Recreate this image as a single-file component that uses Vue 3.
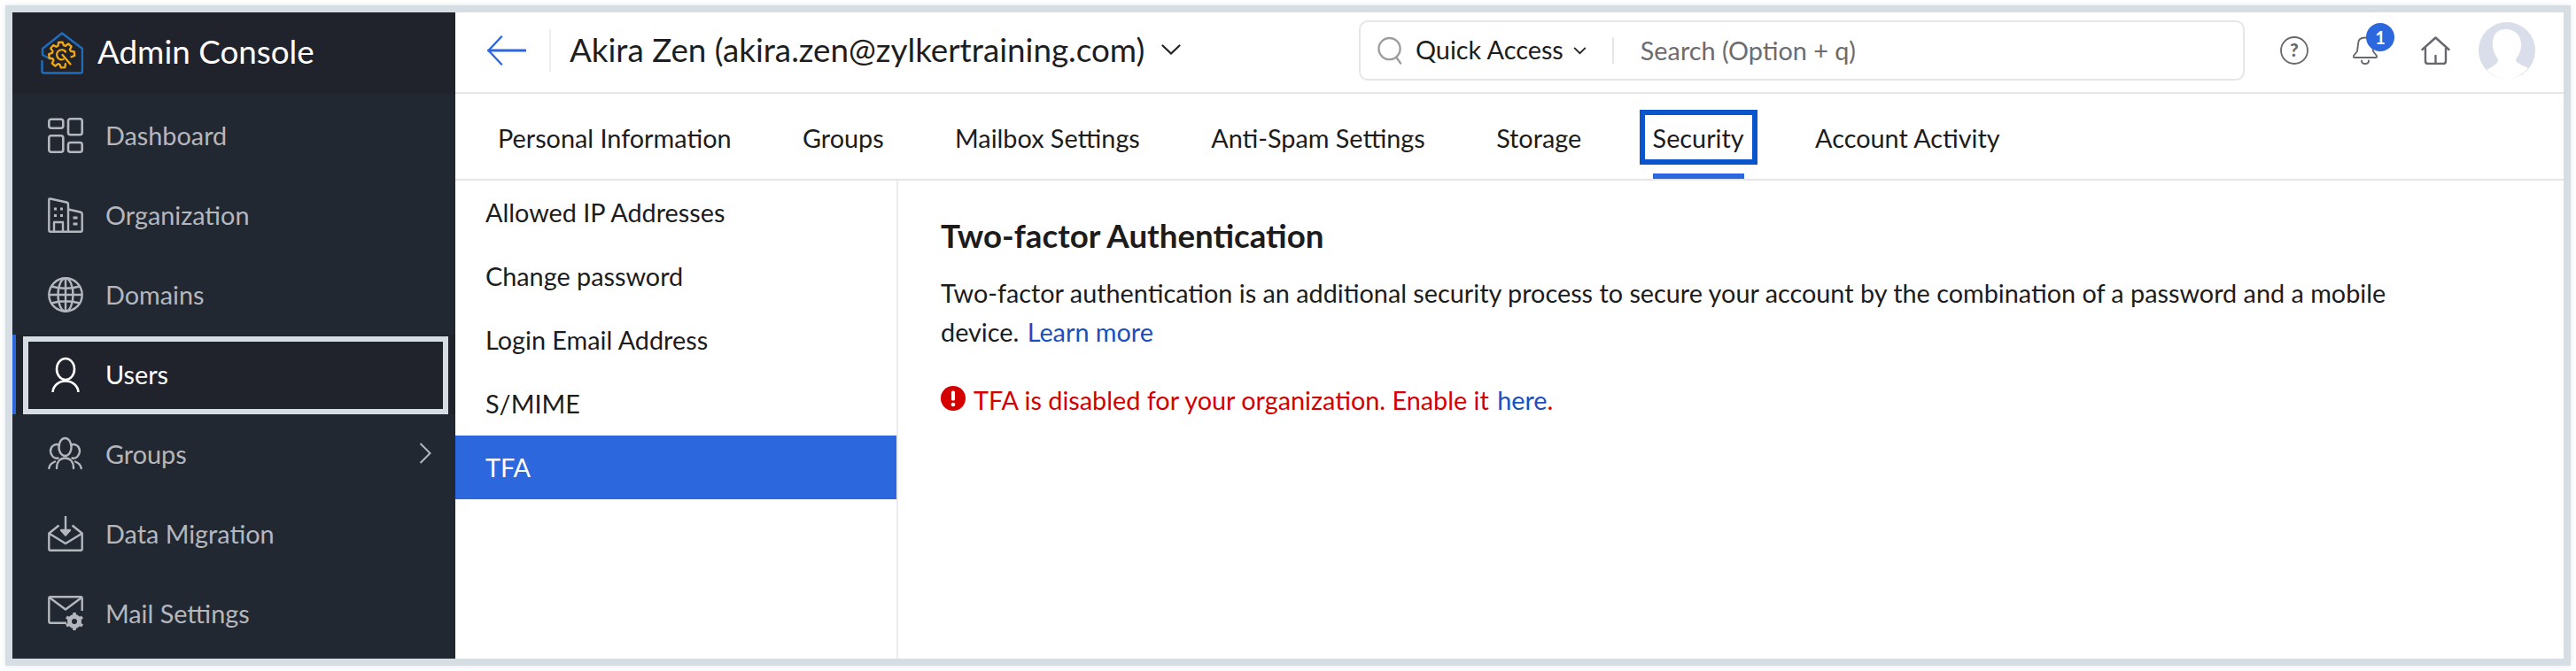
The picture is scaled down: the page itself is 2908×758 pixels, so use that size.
<script setup>
const tabs = ['Personal Information', 'Groups', 'Mailbox Settings', 'Anti-Spam Settings', 'Storage', 'Security', 'Account Activity']
const subItems = ['Allowed IP Addresses', 'Change password', 'Login Email Address', 'S/MIME', 'TFA']

// Gear outline for the logo: eight teeth, left open at the lower right for the spanner handle.
function gearPath(cx, cy, rOut, rIn, teeth, startDeg, sweepDeg) {
  const step = 360 / teeth
  const pts = []
  for (let a = startDeg; a < startDeg + sweepDeg - 0.01; a += step) {
    const offs = [[0.12, rIn], [0.3, rOut], [0.7, rOut], [0.88, rIn]]
    for (const [f, r] of offs) {
      const t = ((a + f * step) * Math.PI) / 180
      pts.push(`${(cx + r * Math.cos(t)).toFixed(2)} ${(cy + r * Math.sin(t)).toFixed(2)}`)
    }
  }
  return 'M' + pts.join(' L')
}
const gear = gearPath(23.7, 26, 14.5, 11, 8, 62, 315)
</script>

<template>
  <div class="frame">
    <aside class="sidebar">
      <div class="brand">
        <svg class="logo" viewBox="0 0 48 48" fill="none">
          <path d="M11.500 31 L2 26 V19 L24 1.500 L47 19 V44.500 Q47 46.500 45 46.500 H3.500 Q1.500 46.500 1.500 44.500 V33" stroke="#1f6ebd" stroke-width="2.400" stroke-linejoin="round" stroke-linecap="round" />
          <path :d="gear" stroke="#f4a90f" stroke-width="2.300" stroke-linejoin="round" stroke-linecap="round" />
          <path d="M28 22.500 A5.500 5.500 0 1 0 25.500 31 M24.500 26 L33.500 36.500" stroke="#f4a90f" stroke-width="2.300" stroke-linecap="round" />
        </svg>
        <span class="brand-name">Admin Console</span>
      </div>
      <nav class="nav">
        <a class="nav-item">
          <svg class="nav-icon" viewBox="0 0 40 40" fill="none" stroke="currentColor" stroke-width="2.600">
            <rect x="1.300" y="1.800" width="16" height="10" rx="2.500" /><rect x="23" y="1.300" width="15.700" height="18" rx="2.500" />
            <rect x="1.300" y="20.300" width="16" height="18.400" rx="2.500" /><rect x="23" y="28" width="15.700" height="10.700" rx="2.500" />
          </svg>
          <span>Dashboard</span>
        </a>
        <a class="nav-item">
          <svg class="nav-icon" viewBox="0 0 40 40" fill="none" stroke="currentColor" stroke-width="2.400" stroke-linejoin="round">
            <path d="M1.300 37 V2.500 Q1.300 1.200 2.800 1.500 L21 5.500 Q23 6 23 8 V38.700 H3 Q1.300 38.700 1.300 37 Z" />
            <path d="M23 13.500 L36.500 16.500 Q38.700 17 38.700 19 V37 Q38.700 38.700 37 38.700 H23" />
            <path d="M7 38.700 V28 H17 V38.700" />
            <path d="M7 13 H10 M14 13 H17 M7 20.500 H10 M14 20.500 H17 M28.500 23 H33.500 M28.500 30 H33.500" stroke-width="2.800" />
          </svg>
          <span>Organization</span>
        </a>
        <a class="nav-item">
          <svg class="nav-icon" viewBox="0 0 40 40" fill="none" stroke="currentColor" stroke-width="2.400">
            <circle cx="20" cy="20" r="18.700" />
            <ellipse cx="20" cy="20" rx="8.500" ry="18.700" />
            <path d="M20 1.300 V38.700 M1.300 20 H38.700 M4 10.500 Q20 15 36 10.500 M4 29.500 Q20 25 36 29.500" />
          </svg>
          <span>Domains</span>
        </a>
        <a class="nav-item active">
          <svg class="nav-icon" viewBox="0 0 40 40" fill="none" stroke="currentColor" stroke-width="2.600" stroke-linecap="round">
            <ellipse cx="20" cy="14" rx="10" ry="12" />
            <path d="M5.500 41 C5.500 33 12 27.500 20 27.500 C28 27.500 34.500 33 34.500 41" />
          </svg>
          <span>Users</span>
        </a>
        <a class="nav-item">
          <svg class="nav-icon" viewBox="0 0 40 40" fill="none" stroke="currentColor" stroke-width="2.400" stroke-linecap="round">
            <ellipse cx="19.500" cy="12" rx="7" ry="10" />
            <path d="M12.500 9.500 C8 8 3 11 3 16.500 C3 21.500 7 25.500 11.500 24.500" />
            <path d="M26.500 9.500 C31 8 36 11 36 16.500 C36 21.500 32 25.500 27.500 24.500" />
            <path d="M10 36 C10 28.500 14 24.500 19.500 24.500 C25 24.500 29 28.500 29 36" />
            <path d="M1.300 36 C1.800 32.500 4 30 8 28.500 M37.700 36 C37.200 32.500 35 30 31 28.500" />
          </svg>
          <span>Groups</span>
          <svg class="nav-caret" viewBox="0 0 14 24" fill="none" stroke="currentColor" stroke-width="2"><path d="M1.500 1 L12.500 12 L1.500 23" /></svg>
        </a>
        <a class="nav-item">
          <svg class="nav-icon" viewBox="0 0 40 40" fill="none" stroke="currentColor" stroke-width="2.400" stroke-linejoin="round">
            <path d="M12.500 10.500 L1.300 19.500 V37 Q1.300 38.700 3 38.700 H37 Q38.700 38.700 38.700 37 V19.500 L27.500 10.500" />
            <path d="M1.300 19.500 L20 31 L38.700 19.500" />
            <path d="M20 0 V20" />
            <path d="M15 16 H25 L20 21.500 Z" fill="currentColor" />
          </svg>
          <span>Data Migration</span>
        </a>
        <a class="nav-item">
          <svg class="nav-icon" viewBox="0 0 40 40" fill="none" stroke="currentColor" stroke-width="2.400" stroke-linejoin="round">
            <path d="M21 30.700 H3 Q1.300 30.700 1.300 29 V2.800 Q1.300 1.300 3 1.300 H37 Q38.700 1.300 38.700 3 V17" />
            <path d="M1.800 2 L20 15.500 L38.200 2" />
            <circle cx="30" cy="29" r="5.500" stroke-width="5" />
            <path d="M30 19 V22.500 M30 35.500 V39 M21 24 L24 26 M36 32 L39 34 M21 34 L24 32 M36 26 L39 24" stroke-width="3.600" />
          </svg>
          <span>Mail Settings</span>
        </a>
      </nav>
    </aside>

    <main class="main">
      <header class="topbar">
        <div class="back-wrap">
          <svg class="back" viewBox="0 0 44 34" fill="none" stroke="#2d67de" stroke-width="2.400" stroke-linecap="round" stroke-linejoin="round">
            <path d="M16 1.500 L1.500 17 L16 32.500" /><path d="M1.500 17 H43" stroke-width="3" />
          </svg>
        </div>
        <div class="who">
          <span>Akira Zen (akira.zen@zylkertraining.com)</span>
          <svg class="who-caret" viewBox="0 0 22 12" fill="none" stroke="#222" stroke-width="2.200" stroke-linecap="round"><path d="M1.500 1.500 L11 10.500 L20.500 1.500" /></svg>
        </div>
        <div class="search">
          <svg class="search-icon" viewBox="0 0 30 32" fill="none" stroke="#9c9c9c" stroke-width="2.400" stroke-linecap="round">
            <ellipse cx="14" cy="14" rx="12.500" ry="12.500" /><path d="M22 24 L27 31" />
          </svg>
          <span class="quick">Quick Access</span>
          <svg class="quick-caret" viewBox="0 0 16 10" fill="none" stroke="#222" stroke-width="2" stroke-linecap="round"><path d="M1.500 1.500 L8 8 L14.500 1.500" /></svg>
          <span class="search-sep"></span>
          <span class="placeholder">Search (Option + q)</span>
        </div>
        <div class="top-icons">
          <svg class="ti ti-help" viewBox="0 0 32 32" fill="none">
            <circle cx="16" cy="16" r="15" stroke="#66686d" stroke-width="1.800" />
            <text x="16" y="23" text-anchor="middle" font-family="Lato, sans-serif" font-size="21" font-weight="900" fill="#66686d">?</text>
          </svg>
          <span class="bell">
            <svg class="ti-bell" viewBox="0 0 28 32" fill="none" stroke="#66686d" stroke-width="1.900" stroke-linejoin="round" stroke-linecap="round">
              <path d="M6 9 Q6 1.500 14 1.500 Q22 1.500 22 9 L23 17 L27 22 Q27.500 24 26 24 H2 Q0.500 24 1 22 L5 17 Z" />
              <path d="M10 27.500 Q10 31 14 31 Q18 31 18 27.500" />
            </svg>
            <b class="badge">1</b>
          </span>
          <svg class="ti ti-home" viewBox="0 0 33 32" fill="none" stroke="#66686d" stroke-width="2.400" stroke-linecap="round" stroke-linejoin="round">
            <path d="M1.500 15 L16.500 1.500 L31.500 15" />
            <path d="M5 14 V28 Q5 31 8 31 H25 Q28 31 28 28 V14" />
            <path d="M16.500 22 V31" />
          </svg>
          <svg class="avatar" viewBox="0 0 64 64">
            <circle cx="32" cy="32" r="32" fill="#dadeea" />
            <path d="M32 8 C20 7 15 16 16 27 C17 34 19 38 22 42 C22 46 20 48 9 54 C18 62 26 64 32 64 C38 64 47 62 56 52 C48 48 42 46 42 42 C46 37 48 32 48 25 C48 15 42 9 32 8 Z" fill="#fff" />
          </svg>
        </div>
      </header>

      <div class="tabs">
        <a v-for="t in tabs" :key="t" class="tab" :class="{ current: t === 'Security' }">{{ t }}</a>
      </div>

      <div class="content">
        <ul class="subnav">
          <li v-for="s in subItems" :key="s" :class="{ on: s === 'TFA' }">{{ s }}</li>
        </ul>
        <section class="detail">
          <h2>Two-factor Authentication</h2>
          <p class="desc">Two-factor authentication is an additional security process to secure your account by the combination of a password and a mobile device. <a>Learn more</a></p>
          <p class="warn">
            <svg class="warn-icon" viewBox="0 0 28 28"><circle cx="14" cy="14" r="14" fill="#d40000" /><rect x="12" y="5.500" width="4" height="11" rx="1.500" fill="#fff" /><circle cx="14" cy="21" r="2.300" fill="#fff" /></svg>
            <span>TFA is disabled for your organization. Enable it <a>here</a>.</span>
          </p>
        </section>
      </div>
    </main>
  </div>
</template>

<style>
html, body { margin: 0; background: #fff; }
</style>

<style scoped>
.frame {
  margin: 6px;
  height: 730px;
  border: 8px solid #d6dee3;
  box-shadow: 0 0 6px rgba(190, 205, 215, .45);
  display: flex;
  font-family: Lato, "Liberation Sans", sans-serif;
  color: #1c1c1c;
  background: #fff;
  overflow: hidden;
}
.sidebar { width: 500px; flex: none; background: #222831; }
.brand {
  height: 92px; background: #20232c;
  display: flex; align-items: center; padding-left: 32px; gap: 17px;
  box-sizing: border-box;
}
.logo { width: 48px; height: 48px; }
.brand-name { color: #fff; font-size: 36.8px; line-height: 1; margin-top: -4px; margin-left: -1px; }
.nav { padding-top: 2px; }
.nav-item {
  position: relative; height: 90px; box-sizing: border-box;
  display: flex; align-items: center; padding-left: 40px; gap: 25px;
  font-size: 28.8px; color: #b4b7bd;
}
.nav-icon { width: 40px; height: 40px; flex: none; }
.nav-caret { width: 14px; height: 24px; position: absolute; right: 27px; top: 32px; color: #b4b7bd; }
.nav-item.active { color: #fff; background: #20232c; border-left: 4px solid #2d67de; padding-left: 36px; }
.nav-item.active::after {
  content: ""; position: absolute; left: 8px; right: 8px; top: 2px; bottom: 0;
  border: 6px solid #d6dee3;
}

.main { flex: 1; min-width: 0; display: flex; flex-direction: column; }
.topbar {
  height: 92px; box-sizing: border-box; flex: none;
  border-bottom: 2px solid #e6e6e6;
  display: flex; align-items: center;
}
.back-wrap {
  margin-left: 36px; padding-right: 26px; height: 48px;
  border-right: 2px solid #ececec; display: flex; align-items: center;
  margin-top: -4px;
}
.back { width: 44px; height: 34px; }
.who { margin-left: 21px; font-size: 36.8px; display: flex; align-items: center; gap: 19px; width: 891px; flex: none; margin-top: -6px; color: #1e1e1e; }
.who-caret { width: 22px; height: 12px; }
.search {
  width: 1000px; height: 68px; box-sizing: border-box; flex: none;
  border: 2px solid #e6e6e6; border-radius: 10px;
  display: flex; align-items: center; padding-left: 19px;
  align-self: flex-start; margin-top: 9px;
}
.search-icon { width: 29px; height: 32px; flex: none; }
.quick { margin-left: 14px; font-size: 28.8px; color: #1c1c1c; margin-top: -2px; }
.quick-caret { width: 15px; height: 9px; margin-left: 11px; }
.search-sep { width: 2px; height: 30px; background: #e6e6e6; margin-left: 29px; }
.placeholder { margin-left: 30px; font-size: 28.8px; color: #6c6c70; }
.top-icons { margin-left: 40px; display: flex; align-items: center; height: 64px; align-self: flex-start; margin-top: 11px; }
.ti-help { width: 32px; height: 32px; }
.bell { position: relative; width: 28px; height: 32px; margin-left: 50px; }
.ti-bell { width: 28px; height: 32px; display: block; }
.badge {
  position: absolute; left: 15px; top: -15px; width: 32px; height: 32px; border-radius: 50%;
  background: #2d67de; color: #fff; font-size: 20px; font-weight: 700; line-height: 32px; text-align: center;
}
.ti-home { width: 33px; height: 32px; margin-left: 49px; }
.avatar { width: 64px; height: 64px; margin-left: 32px; }

.tabs {
  height: 98px; box-sizing: border-box; flex: none;
  border-bottom: 2px solid #e6e6e6;
  display: flex; padding-left: 48px; gap: 80.4px; align-items: stretch;
}
.tab { position: relative; font-size: 28.8px; line-height: 90px; padding-top: 5px; white-space: nowrap; color: #1c1c1c; }
.tab.current::before {
  content: ""; position: absolute; left: -15px; right: -15px; top: 18px; height: 62px;
  border: 6px solid #0a55cc; box-sizing: border-box;
}
.tab.current::after {
  content: ""; position: absolute; left: 0; right: 0; bottom: 0; height: 6px; background: #2d67de;
}

.content { flex: 1; display: flex; min-height: 0; }
.subnav { width: 498px; box-sizing: content-box; flex: none; margin: 0; padding: 0; list-style: none; border-right: 2px solid #ececec; }
.subnav li { height: 72px; line-height: 72px; padding-left: 34px; font-size: 28.8px; color: #1c1c1c; }
.subnav li.on { background: #2d67de; color: #fff; }
.detail { flex: 1; padding: 0 150px 0 48px; }
.detail h2 { margin: 40px 0 0; font-size: 36.7px; line-height: 44px; font-weight: 700; color: #1c1c1c; }
.desc { margin: 21px 0 0; font-size: 28.8px; line-height: 44px; color: #1c1c1c; }
.desc a { color: #1a4fc0; margin-left: 2px; }
.warn { margin: 33px 0 0; font-size: 28.8px; line-height: 44px; color: #d40000; display: flex; align-items: center; gap: 9px; }
.warn a { color: #1a4fc0; margin-left: 2px; }
.warn-icon { width: 28px; height: 28px; flex: none; margin-top: -4px; }
</style>
